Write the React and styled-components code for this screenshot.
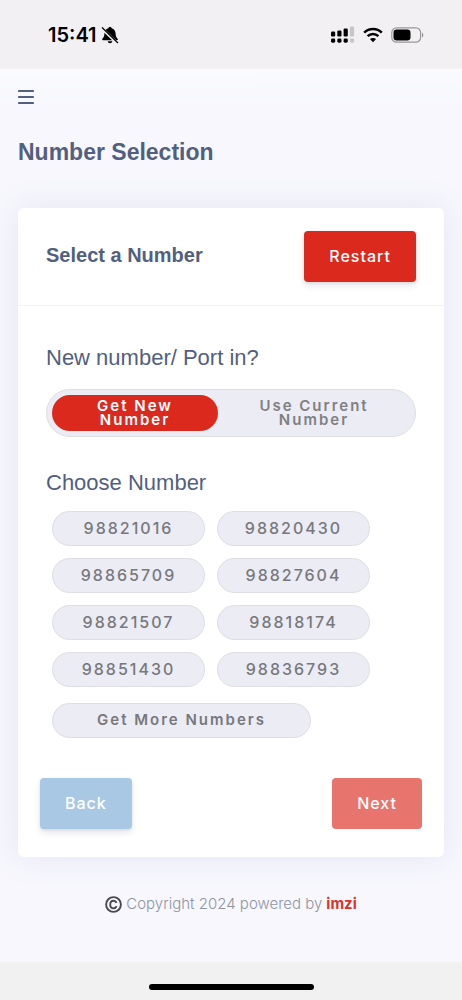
import React, { useState } from 'react'
import styled, { createGlobalStyle } from 'styled-components';

const GlobalStyle = createGlobalStyle`
    *, *::before, *::after {
        box-sizing: border-box;
    }
    body {
        margin: 0;
        background: #f8f8fd;
        color: #525f7f;
        font-family: "Liberation Sans", Arial, sans-serif;
    }
    button, input {
        font-family: inherit;
    }
`;
const Page = styled.div`
    min-height: 100vh;
    display: flex;
    flex-direction: column;
`;
const StatusBar = styled.div`
    height: 69px;
    padding: 0 38px 0 48px;
    display: flex;
    align-items: center;
    justify-content: space-between;
    background: #f2f0f3;
    color: #000;
`;
const StatusGroup = styled.div`
    display: flex;
    align-items: center;
    gap: ${props => props.$gap}px;
`;
const Clock = styled.span`
    font-family: Inter, sans-serif;
    font-size: 20px;
    font-weight: 600;
    line-height: 24px;
`;
const Main = styled.main`
    flex: 1;
    padding: 15px 18px 0;
    background: linear-gradient(#fafbfd, #f7f7fd 40px);
`;
const MenuButton = styled.button`
    display: block;
    padding: 5px 0;
    border: 0;
    background: none;
    color: #525f7f;
    line-height: 0;
    cursor: pointer;
`;
const PageTitle = styled.h1`
    margin: 28px 0 42px;
    font-size: 23px;
    font-weight: 700;
    line-height: 28px;
`;
const Card = styled.section`
    background: #fff;
    border-radius: 6px;
    box-shadow: 0 0 32px rgba(136, 130, 190, .14);
`;
const CardHeader = styled.header`
    display: flex;
    align-items: center;
    justify-content: space-between;
    padding: 23px 28px;
    border-bottom: 1px solid #f3f3f6;
`;
const CardTitle = styled.h2`
    margin: 0 0 4px;
    font-size: 20px;
    font-weight: 700;
    line-height: 24px;
`;
const Button = styled.button`
    height: 51px;
    padding: 0 25px 2px;
    border: 0;
    border-radius: 4px;
    background: ${props => props.$color};
    box-shadow: ${props => props.$flat ? 'none' : '0 4px 6px rgba(50, 50, 93, .11), 0 1px 3px rgba(0, 0, 0, .08)'};
    color: #fff;
    font-family: Inter, sans-serif;
    font-size: 16px;
    font-weight: 500;
    letter-spacing: 1px;
    cursor: pointer;
`;
const CardBody = styled.form`
    padding: 38px 28px 0;
`;
const Group = styled.fieldset`
    min-width: 0;
    margin: 0 0 32px;
    padding: 0;
    border: 0;
`;
const Legend = styled.legend`
    padding: 0;
    margin-bottom: ${props => props.$tight ? 14 : 17}px;
    font-size: 22px;
    line-height: 28px;
`;
const HiddenRadio = styled.input`
    position: absolute;
    opacity: 0;
    pointer-events: none;
`;
const Segmented = styled.div`
    display: grid;
    grid-template-columns: 166px 1fr;
    padding: 5px;
    border: 1px solid #dfdfe3;
    border-radius: 24px;
    background: #ebecf4;
`;
const Segment = styled.label`
    position: relative;
    height: 36px;
    padding: 0 28px;
    display: flex;
    align-items: center;
    justify-content: center;
    border-radius: 18px;
    color: #808084;
    font-family: Inter, sans-serif;
    font-size: 15px;
    font-weight: 600;
    line-height: 14px;
    letter-spacing: 2px;
    text-align: center;
    cursor: pointer;
    &:has(:checked) {
        background: #dc291e;
        color: #fff;
    }
`;
const Chips = styled.div`
    display: grid;
    grid-template-columns: repeat(2, 153px);
    gap: 12px;
    padding: 0 6px;
`;
const chip = `
    position: relative;
    height: 35px;
    padding: 0 0 2px;
    display: flex;
    align-items: center;
    justify-content: center;
    border: 1px solid #dfdfe3;
    border-radius: 18px;
    background: #ebecf4;
    color: #78787c;
    font-family: Inter, sans-serif;
    letter-spacing: 2px;
    cursor: pointer;
`;
const Chip = styled.label`
    ${chip}
    font-size: 16px;
    font-weight: 500;
    &:has(:checked) {
        background: #dc291e;
        color: #fff;
    }
`;
const MoreButton = styled.button`
    ${chip}
    width: 259px;
    margin: 16px 6px 0;
    font-size: 15px;
    font-weight: 600;
`;
const Actions = styled.div`
    display: flex;
    justify-content: space-between;
    padding: 8px 22px 28px;
`;
const Footer = styled.footer`
    display: flex;
    align-items: center;
    justify-content: center;
    gap: 4px;
    padding: 35px 0;
    color: #8f95a3;
    font-family: Inter, sans-serif;
    font-size: 15px;
    font-weight: 300;
    line-height: 24px;
`;
const BrandLink = styled.a`
    color: #d6342a;
    font-weight: 700;
    text-decoration: none;
`;
const HomeArea = styled.div`
    height: 38px;
    padding-top: 22px;
    background: #f2f1f2;
`;
const HomeIndicator = styled.div`
    width: 165px;
    height: 6px;
    margin: 0 auto;
    border-radius: 3px;
    background: #000;
`;

const numbers = [
    '98821016', '98820430',
    '98865709', '98827604',
    '98821507', '98818174',
    '98851430', '98836793',
];

const BellOff = () => (
    <svg width="18" height="18" viewBox="0 0 18 18" aria-hidden="true">
        <path d="M9 1c.9 0 1.500.5 1.700 1.300C13.200 3 14.500 5 14.600 7.600c.1 3 .8 3.900 2 5.200.5.600.2 1.500-.6 1.500H2c-.8 0-1.100-.9-.6-1.500 1.200-1.300 1.900-2.200 2-5.200C3.500 5 4.800 3 7.300 2.300 7.500 1.500 8.100 1 9 1zM6.700 15.300h4.600c-.2 1.200-1.100 2-2.300 2s-2.100-.8-2.300-2z" fill="#000" />
        <path d="M.8 2.200 16.200 17.200" stroke="#f2f0f3" strokeWidth="2.800" />
        <path d="M1.300 1.700 16.700 16.700" stroke="#000" strokeWidth="1.200" strokeLinecap="round" />
    </svg>
)

const Signal = () => (
    <svg width="24" height="18" viewBox="0 0 24 18" aria-hidden="true">
        <g fill="#000">
            <rect x="0" y="5.500" width="4.200" height="5" rx="1.200" />
            <rect x="6.300" y="4.500" width="4.200" height="6" rx="1.200" />
            <rect x="12.600" y="2.500" width="4.200" height="8" rx="1.200" />
            <rect x="0" y="12.500" width="4.200" height="4.200" rx="1.400" />
            <rect x="6.300" y="12.500" width="4.200" height="4.200" rx="1.400" />
            <rect x="12.600" y="12.500" width="4.200" height="4.200" rx="1.400" />
        </g>
        <g fill="#c6c5c8">
            <rect x="18.900" y=".5" width="4.200" height="10" rx="1.200" />
            <rect x="18.900" y="12.500" width="4.200" height="4.200" rx="1.400" />
        </g>
    </svg>
)

const Wifi = () => (
    <svg width="20" height="16" viewBox="0 0 20 16" fill="none" stroke="#000" strokeWidth="2.500" aria-hidden="true">
        <path d="M1.200 5.700C6.200.900 13.800.900 18.800 5.700" />
        <path d="M4.600 9.200c3.100-2.900 7.700-2.900 10.800 0" />
        <path d="M10 15.200 6.900 12.100c1.800-1.600 4.400-1.600 6.200 0z" fill="#000" stroke="none" />
    </svg>
)

const Battery = () => (
    <svg width="33" height="16" viewBox="0 0 33 16" aria-hidden="true">
        <rect x=".8" y=".8" width="28.800" height="14.400" rx="4.800" fill="none" stroke="#99989b" strokeWidth="1.200" />
        <rect x="2.500" y="2.500" width="17" height="11" rx="3.200" fill="#000" />
        <path d="M31 5.500v5c1.800-.8 1.800-4.200 0-5z" fill="#99989b" />
    </svg>
)

const Copyright = () => (
    <svg width="17" height="17" viewBox="0 0 17 17" fill="none" stroke="#4b4b4f" strokeWidth="1.900" aria-hidden="true">
        <circle cx="8.500" cy="8.500" r="7.400" />
        <path d="M11.600 6.900C11 5.400 9.900 4.700 8.600 4.700 6.500 4.700 5.200 6.300 5.200 8.500s1.300 3.800 3.400 3.800c1.300 0 2.400-.7 3-2.200" />
    </svg>
)

export default function App() {
    const [mode, setMode] = useState('new');
    const [number, setNumber] = useState(null);

    return (
        <Page>
            <GlobalStyle />
            <StatusBar>
                <StatusGroup $gap={4}>
                    <Clock>15:41</Clock>
                    <BellOff />
                </StatusGroup>
                <StatusGroup $gap={8}>
                    <Signal />
                    <Wifi />
                    <Battery />
                </StatusGroup>
            </StatusBar>
            <Main>
                <MenuButton type="button" aria-label="Menu">
                    <svg width="16" height="16" viewBox="0 0 16 16" stroke="currentColor" strokeWidth="2.200" strokeLinecap="round">
                        <path d="M1 2h14M1 8h14M1 14h14" />
                    </svg>
                </MenuButton>
                <PageTitle>Number Selection</PageTitle>
                <Card>
                    <CardHeader>
                        <CardTitle>Select a Number</CardTitle>
                        <Button type="button" $color="#dc291e">Restart</Button>
                    </CardHeader>
                    <CardBody>
                        <Group>
                            <Legend>New number/ Port in?</Legend>
                            <Segmented>
                                <Segment>
                                    <HiddenRadio type="radio" name="mode" checked={mode === 'new'} onChange={() => setMode('new')} />
                                    Get New Number
                                </Segment>
                                <Segment>
                                    <HiddenRadio type="radio" name="mode" checked={mode === 'current'} onChange={() => setMode('current')} />
                                    Use Current Number
                                </Segment>
                            </Segmented>
                        </Group>
                        <Group>
                            <Legend $tight>Choose Number</Legend>
                            <Chips>
                                {numbers.map(n => (
                                    <Chip key={n}>
                                        <HiddenRadio type="radio" name="number" checked={number === n} onChange={() => setNumber(n)} />
                                        {n}
                                    </Chip>
                                ))}
                            </Chips>
                            <MoreButton type="button">Get More Numbers</MoreButton>
                        </Group>
                    </CardBody>
                    <Actions>
                        <Button type="button" $color="#a9c8e3">Back</Button>
                        <Button type="button" $color="#e8756d" $flat>Next</Button>
                    </Actions>
                </Card>
                <Footer>
                    <Copyright />
                    <span>Copyright 2024 powered by</span>
                    <BrandLink href="#imzi">imzi</BrandLink>
                </Footer>
            </Main>
            <HomeArea>
                <HomeIndicator />
            </HomeArea>
        </Page>
    )
}
